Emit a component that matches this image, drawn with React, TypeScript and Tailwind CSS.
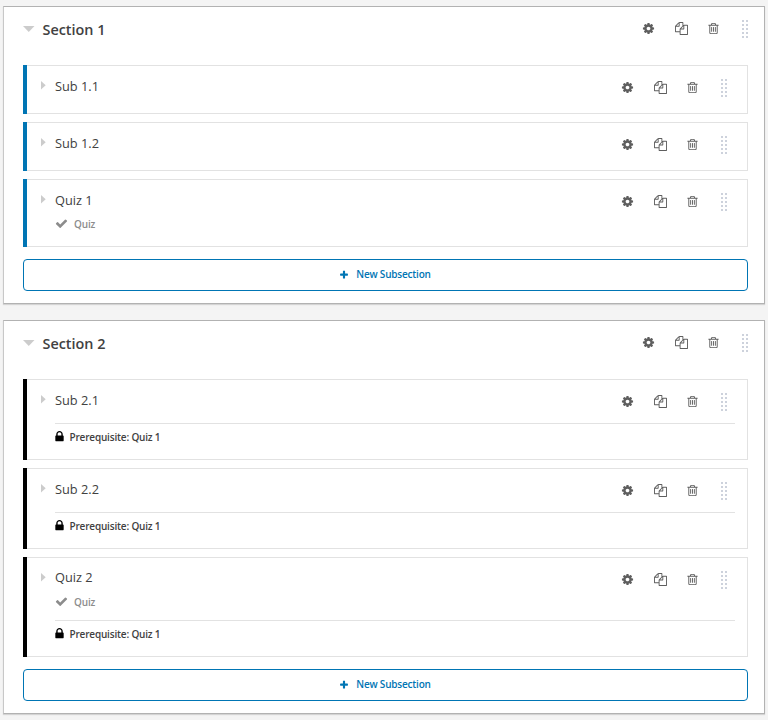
import React from "react";

const PATHS = {
  cog: "M1152 896q0-106-75-181t-181-75-181 75-75 181 75 181 181 75 181-75 75-181zm512-109v222q0 12-8 23t-20 13l-185 28q-19 54-39 91 35 50 107 138 10 12 10 25t-9 23q-27 37-99 108t-94 71q-12 0-26-9l-138-108q-44 23-91 38-16 136-29 186-7 28-36 28h-222q-14 0-24.5-8.5t-11.5-21.5l-28-184q-49-16-90-37l-141 107q-10 9-25 9-14 0-25-11-126-114-165-168-7-10-7-23 0-12 8-23 15-21 51-66.5t54-70.5q-27-50-41-99l-183-27q-13-2-21-12.5t-8-23.5v-222q0-12 8-23t19-13l186-28q14-46 39-92-40-57-107-138-10-12-10-24 0-10 9-23 26-36 98.5-107.5t94.5-71.5q13 0 26 10l138 107q44-23 91-38 16-136 29-186 7-28 36-28h222q14 0 24.5 8.5t11.5 21.5l28 184q49 16 90 37l142-107q9-9 24-9 13 0 25 10 129 119 165 170 7 8 7 22 0 12-8 23-15 21-51 66.5t-54 70.5q26 50 41 98l183 28q13 2 21 12.5t8 23.5z",
  copy: "M1696 384q40 0 68 28t28 68v1216q0 40-28 68t-68 28h-960q-40 0-68-28t-28-68v-288h-544q-40 0-68-28t-28-68v-672q0-40 20-88t48-76l408-408q28-28 76-48t88-20h416q40 0 68 28t28 68v328q68-40 128-40h416zm-544 213l-299 299h299v-299zm-640-384l-299 299h299v-299zm196 647l316-316v-416h-384v416q0 40-28 68t-68 28h-416v640h512v-256q0-40 20-88t48-76zm956 804v-1152h-384v416q0 40-28 68t-68 28h-416v640h896z",
  trash: "M704 736v576q0 14-9 23t-23 9h-64q-14 0-23-9t-9-23v-576q0-14 9-23t23-9h64q14 0 23 9t9 23zm256 0v576q0 14-9 23t-23 9h-64q-14 0-23-9t-9-23v-576q0-14 9-23t23-9h64q14 0 23 9t9 23zm256 0v576q0 14-9 23t-23 9h-64q-14 0-23-9t-9-23v-576q0-14 9-23t23-9h64q14 0 23 9t9 23zm128 724v-948h-896v948q0 22 7 40.5t14.5 27 10.5 8.5h832q3 0 10.5-8.5t14.5-27 7-40.5zm-672-1076h448l-48-117q-7-9-17-11h-317q-10 2-17 11zm928 32v64q0 14-9 23t-23 9h-96v948q0 83-47 143.5t-113 60.5h-832q-66 0-113-58.5t-47-141.5v-952h-96q-14 0-23-9t-9-23v-64q0-14 9-23t23-9h309l70-167q15-37 54-63t79-26h320q40 0 79 26t54 63l70 167h309q14 0 23 9t9 23z",
  check: "M1671 566q0 40-28 68l-724 724-136 136q-28 28-68 28t-68-28l-136-136-362-362q-28-28-28-68t28-68l136-136q28-28 68-28t68 28l294 295 656-657q28-28 68-28t68 28l136 136q28 28 28 68z",
  lock: "M640 768h512v-192q0-106-75-181t-181-75-181 75-75 181v192zm832 96v576q0 40-28 68t-68 28h-960q-40 0-68-28t-28-68v-576q0-40 28-68t68-28h32v-192q0-184 132-316t316-132 316 132 132 316v192h32q40 0 68 28t28 68z",
  plus: "M1600 736v192q0 40-28 68t-68 28h-416v416q0 40-28 68t-68 28h-192q-40 0-68-28t-28-68v-416h-416q-40 0-68-28t-28-68v-192q0-40 28-68t68-28h416v-416q0-40 28-68t68-28h192q40 0 68 28t28 68v416h416q40 0 68 28t28 68z",
};

function Icon({ name, className }: { name: keyof typeof PATHS; className: string }) {
  return (
    <svg viewBox="0 0 1792 1792" fill="currentColor" className={`shrink-0 ${className}`}>
      <path d={PATHS[name]} />
    </svg>
  );
}

function DragHandle() {
  return (
    <svg width="6" height="18" viewBox="0 0 6 18" fill="#cdd2dc" className="ml-[22px] shrink-0">
      {[0, 4, 8, 12, 16].map((y) => (
        <React.Fragment key={y}>
          <rect x="0" y={y} width="2" height="2" />
          <rect x="4" y={y} width="2" height="2" />
        </React.Fragment>
      ))}
    </svg>
  );
}

function Actions() {
  return (
    <div className="flex h-[18px] items-center text-[#5e5e5e]">
      <Icon name="cog" className="mb-[2px] size-[13px]" />
      <Icon name="copy" className="mb-[2px] ml-5 size-[13px]" />
      <Icon name="trash" className="mb-[2px] ml-[19px] size-[13px]" />
      <DragHandle />
    </div>
  );
}

type Item = { title: string; quiz?: boolean; prerequisite?: string };

function Subsection({ item, locked }: { item: Item; locked: boolean }) {
  const height = item.prerequisite
    ? item.quiz ? "h-[100px]" : "h-[81px]"
    : item.quiz ? "h-[68px]" : "h-[49px]";
  return (
    <li className={`mb-2 flex border-l-4 ${locked ? "border-black" : "border-[#0075b4]"} ${height}`}>
      <div className="flex-1 border border-l-0 border-[#e2e2e2] pr-3 pl-[14px]">
        <div className="flex items-start justify-between pt-[11px] pr-2">
          <div className={`flex ${item.quiz && item.prerequisite ? "-mt-px" : ""}`}>
            <svg width="5" height="9" viewBox="0 0 5 9" fill="#ccc" className={`mr-[9px] ${item.quiz && item.prerequisite ? "mt-[5px]" : "mt-1"}`}>
              <path d="M0 0L4.7 4.3L0 8.6z" />
            </svg>
            <h3 className="h-[18px] text-[12.8px] leading-[18px] text-[#414141]">{item.title}</h3>
          </div>
          <div className="pt-[2px]"><Actions /></div>
        </div>
        {item.quiz && (
          <div className="mt-1 flex h-[18px] items-center pl-[14px] text-[#8c8c8c]">
            <Icon name="check" className="mb-[2px] size-[13px]" />
            <span className="ml-[6px] text-[10px] leading-[14px] font-semibold tracking-[-0.15px]">Quiz</span>
          </div>
        )}
        {item.prerequisite && (
          <div className={`${item.quiz ? "mt-[9px]" : "mt-3"} ml-[14px] flex items-center border-t border-[#e2e2e2] pt-[5px]`}>
            <Icon name="lock" className="mb-[2px] -ml-[2.5px] size-[13px] text-black" />
            <span className="ml-1 text-[10px] leading-4 font-semibold tracking-[-0.18px] text-[#414141]">Prerequisite: {item.prerequisite}</span>
          </div>
        )}
      </div>
    </li>
  );
}

function Section({ title, items, locked = false }: { title: string; items: Item[]; locked?: boolean }) {
  return (
    <section className="mb-4 border border-[#b2b2b2] border-l-[#c8c8c8] bg-white px-[19px] pt-3 pr-4 pb-3 shadow-[0_1px_1px_#d4d4d4]">
      <header className="flex h-[46px] items-start justify-between">
        <div className="flex">
          <svg width="12" height="6" viewBox="0 0 12 6" fill="#ccc" className="-ml-[0.5px] mt-[7px] mr-2">
            <path d="M0 0H11.5L5.75 6z" />
          </svg>
          <h2 className="text-[14.4px] leading-[21px] font-semibold text-[#414141]">{title}</h2>
        </div>
        <div className="pt-px"><Actions /></div>
      </header>
      <ul>
        {items.map((item) => <Subsection key={item.title} item={item} locked={locked} />)}
      </ul>
      <button className="mt-3 flex h-8 w-full items-center justify-center rounded-[4px] border border-[#0075b4] pr-px pb-px text-[10px] leading-[15px] font-semibold tracking-[-0.2px] text-[#0075b4]">
        <Icon name="plus" className="mr-[7px] size-[10px]" />
        New Subsection
      </button>
    </section>
  );
}

export default function App() {
  return (
    <main className="h-[720px] overflow-hidden bg-[#f4f4f4] pt-[6px] pr-[3px] pl-[3px] font-['Open_Sans',sans-serif]">
      <Section title="Section 1" items={[{ title: "Sub 1.1" }, { title: "Sub 1.2" }, { title: "Quiz 1", quiz: true }]} />
      <Section
        title="Section 2"
        locked
        items={[
          { title: "Sub 2.1", prerequisite: "Quiz 1" },
          { title: "Sub 2.2", prerequisite: "Quiz 1" },
          { title: "Quiz 2", quiz: true, prerequisite: "Quiz 1" },
        ]}
      />
    </main>
  );
}
